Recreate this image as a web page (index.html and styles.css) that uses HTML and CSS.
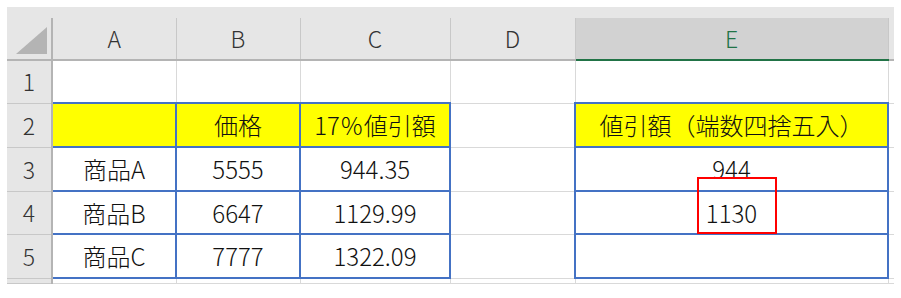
FILE: index.html
```html
<!DOCTYPE html>
<html lang="ja">
<head>
    <meta charset="UTF-8">
    <title>値引額</title>
    <link rel="stylesheet" href="styles.css">
</head>
<body>
    <div class="sheet">
        <div class="topband"></div>
        <table class="grid">
            <colgroup>
                <col class="c-rowhead">
                <col class="c-a">
                <col class="c-b">
                <col class="c-c">
                <col class="c-d">
                <col class="c-e">
                <col class="c-edge">
            </colgroup>
            <thead>
                <tr class="r-head">
                    <th class="corner">
                        <svg width="32" height="28" viewBox="0 0 32 28"><polygon points="0,27 31,27 31,0" fill="#b4b4b4"/></svg>
                    </th>
                    <th class="colhead">A</th>
                    <th class="colhead">B</th>
                    <th class="colhead">C</th>
                    <th class="colhead">D</th>
                    <th class="colhead selected">E</th>
                    <th class="colhead edge"></th>
                </tr>
            </thead>
            <tbody>
                <tr class="r1">
                    <th class="rowhead">1</th>
                    <td></td><td></td><td></td><td></td><td></td><td class="edge"></td>
                </tr>
                <tr class="r2">
                    <th class="rowhead">2</th>
                    <td class="box head"></td>
                    <td class="box head">価格</td>
                    <td class="box head">17％値引額</td>
                    <td></td>
                    <td class="box head">値引額（端数四捨五入）</td>
                    <td class="edge"></td>
                </tr>
                <tr class="r3">
                    <th class="rowhead">3</th>
                    <td class="box">商品A</td>
                    <td class="box">5555</td>
                    <td class="box">944.35</td>
                    <td></td>
                    <td class="box">944</td>
                    <td class="edge"></td>
                </tr>
                <tr class="r4">
                    <th class="rowhead">4</th>
                    <td class="box">商品B</td>
                    <td class="box">6647</td>
                    <td class="box">1129.99</td>
                    <td></td>
                    <td class="box">1130</td>
                    <td class="edge"></td>
                </tr>
                <tr class="r5">
                    <th class="rowhead">5</th>
                    <td class="box">商品C</td>
                    <td class="box">7777</td>
                    <td class="box">1322.09</td>
                    <td></td>
                    <td class="box"></td>
                    <td class="edge"></td>
                </tr>
                <tr class="r6">
                    <th class="rowhead"></th>
                    <td></td><td></td><td></td><td></td><td></td><td class="edge"></td>
                </tr>
            </tbody>
        </table>
        <!-- 注目セルの赤枠 -->
        <div class="mark"></div>
    </div>
</body>
</html>
```

FILE: styles.css
```css
body {
    margin: 0;
    background: #ffffff;
    font-family: "Noto Sans CJK JP", "Noto Sans", sans-serif;
}
.sheet {
    position: relative;
    margin: 7px 0 0 7px;
    width: 887px;
}
.topband {
    height: 11px;
    background: #e6e6e6;
}
.grid {
    border-collapse: collapse;
    table-layout: fixed;
    width: 887px;
}
.c-rowhead { width: 45px; }
.c-a { width: 124px; }
.c-b { width: 124px; }
.c-c { width: 150px; }
.c-d { width: 125px; }
.c-e { width: 313px; }
.c-edge { width: 6px; }

th, td {
    padding: 0;
    text-align: center;
    vertical-align: middle;
    font-size: 24px;
    font-weight: 300;
    color: #222222;
    line-height: 1;
    white-space: nowrap;
    overflow: visible;
}
td {
    border: 1px solid #d9d9d9;
}
.grid td:first-of-type {
    border-left: none;
}

.r-head { height: 42px; }
.r1 { height: 43px; }
.r2 { height: 44px; }
.r3 { height: 44px; }
.r4 { height: 43px; }
.r5 { height: 44px; }
.r6 { height: 5px; }

.corner {
    background: #e6e6e6;
    border-right: 2px solid #b4b4b4;
    border-bottom: 2px solid #b4b4b4;
    text-align: right;
    vertical-align: bottom;
    padding: 0 3px 4px 0;
}
.corner svg {
    display: block;
    margin-left: auto;
}
.colhead {
    background: #e6e6e6;
    border-right: 1px solid #c8c8c8;
    border-bottom: 2px solid #b4b4b4;
    color: #333333;
    font-size: 23px;
}
.colhead.selected {
    background: #d2d2d2;
    color: #217346;
    border-bottom: 2px solid #217346;
}
.colhead.edge {
    border-right: none;
}
.rowhead {
    background: #e6e6e6;
    border-right: 2px solid #b4b4b4;
    border-bottom: 1px solid #c8c8c8;
    color: #333333;
    font-size: 23px;
}
td.edge {
    border-right: none;
    border-top: none;
    border-bottom: 1px solid #d9d9d9;
}

.box {
    border: 2px solid #4472c4;
    color: #111111;
}
.box.head {
    background: #ffff00;
}

.mark {
    position: absolute;
    left: 690px;
    top: 170px;
    width: 76px;
    height: 53px;
    border: 2px solid #ff0000;
}
```
